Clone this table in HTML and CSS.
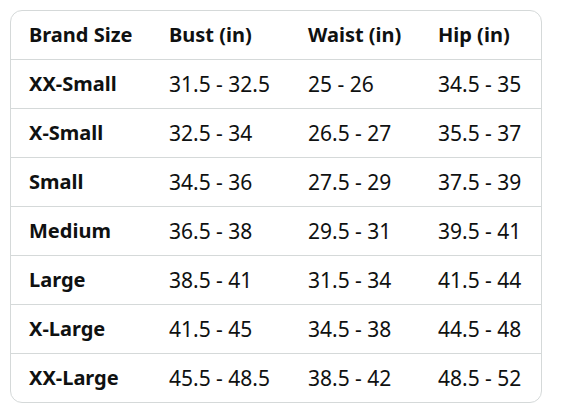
FILE: index.html
```html
<!DOCTYPE html>
<html>
<head>
<meta charset="utf-8">
<link rel="stylesheet" href="styles.css">
</head>
<body>
<div class="card">
<table class="sizes">
<colgroup><col class="c1"><col class="c2"><col class="c3"><col class="c4"></colgroup>
<thead>
<tr><th>Brand Size</th><th>Bust (in)</th><th>Waist (in)</th><th>Hip (in)</th></tr>
</thead>
<tbody>
<tr><th>XX-Small</th><td>31.5 - 32.5</td><td>25 - 26</td><td>34.5 - 35</td></tr>
<tr><th>X-Small</th><td>32.5 - 34</td><td>26.5 - 27</td><td>35.5 - 37</td></tr>
<tr><th>Small</th><td>34.5 - 36</td><td>27.5 - 29</td><td>37.5 - 39</td></tr>
<tr><th>Medium</th><td>36.5 - 38</td><td>29.5 - 31</td><td>39.5 - 41</td></tr>
<tr><th>Large</th><td>38.5 - 41</td><td>31.5 - 34</td><td>41.5 - 44</td></tr>
<tr><th>X-Large</th><td>41.5 - 45</td><td>34.5 - 38</td><td>44.5 - 48</td></tr>
<tr><th>XX-Large</th><td>45.5 - 48.5</td><td>38.5 - 42</td><td>48.5 - 52</td></tr>
</tbody>
</table>
</div>
</body>
</html>
```
FILE: styles.css
```css
html, body { margin: 0; padding: 0; background: #fff; }
body { padding: 10px 19px 3px 10px; }
.card {
  width: 530px;
  border: 1px solid #d5d9d9;
  border-radius: 12px;
  overflow: hidden;
}
.sizes {
  width: 100%;
  border-collapse: collapse;
  table-layout: fixed;
  font-family: "Noto Sans", sans-serif;
  font-size: 20px;
  color: #0f1111;
}
.c1 { width: 140px; }
.c2 { width: 139px; }
.c3 { width: 130px; }
.c4 { width: 121px; }
.sizes th, .sizes td {
  height: 48px;
  padding: 0 0 0 18px;
  text-align: left;
  vertical-align: middle;
  white-space: nowrap;
  line-height: 24px;
}
.sizes th { font-weight: 700; }
.sizes td { font-weight: 400; font-size: 21px; }
.sizes tr + tr th, .sizes tr + tr td, .sizes tbody tr:first-child th, .sizes tbody tr:first-child td {
  border-top: 1px solid #d5d9d9;
}
```
